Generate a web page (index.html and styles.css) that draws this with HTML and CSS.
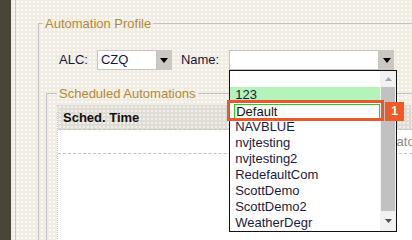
FILE: index.html
```html
<!DOCTYPE html>
<html>
<head>
<meta charset="utf-8">
<link rel="stylesheet" href="styles.css">
</head>
<body>
<div class="app">
  <div class="rail"></div>
  <div class="gutter"></div>
  <div class="main">
    <fieldset class="profile">
      <legend class="legend">Automation Profile</legend>
      <div class="filters">
        <span class="lbl">ALC:</span>
        <div class="select alc">
          <span class="value">CZQ</span>
          <span class="btn"><svg width="8" height="5" viewBox="0 0 8 5"><polygon points="0,0 8,0 4,5" fill="#000"/></svg></span>
        </div>
        <span class="lbl name-lbl">Name:</span>
        <div class="select name">
          <span class="value"></span>
          <span class="btn"><svg width="8" height="5" viewBox="0 0 8 5"><polygon points="0,0 8,0 4,5" fill="#000"/></svg></span>
          <div class="dropdown">
            <div class="options">
              <div class="opt"></div>
              <div class="opt sel">123</div>
              <div class="opt focus"><span class="ring">Default</span></div>
              <div class="opt">NAVBLUE</div>
              <div class="opt">nvjtesting</div>
              <div class="opt">nvjtesting2</div>
              <div class="opt">RedefaultCom</div>
              <div class="opt">ScottDemo</div>
              <div class="opt">ScottDemo2</div>
              <div class="opt">WeatherDegr</div>
            </div>
            <div class="scrollbar">
              <div class="sb-btn"><svg width="7" height="4" viewBox="0 0 7 4"><polygon points="0,4 7,4 3.5,0" fill="#a6a6a6"/></svg></div>
              <div class="sb-thumb"></div>
              <div class="sb-btn down"><svg width="7" height="4" viewBox="0 0 7 4"><polygon points="0,0 7,0 3.5,4" fill="#505050"/></svg></div>
            </div>
            <div class="callout"></div>
            <div class="badge">1</div>
          </div>
        </div>
      </div>
      <fieldset class="sched">
        <legend class="legend inner">Scheduled Automations</legend>
        <div class="table">
          <div class="thead"><div class="th">Sched. Time</div></div>
          <div class="trow"><div class="td first"></div><div class="td muted">Automator</div></div>
        </div>
      </fieldset>
    </fieldset>
  </div>
</div>
</body>
</html>
```
FILE: styles.css
```css
* { box-sizing: border-box; }
html, body { margin: 0; padding: 0; }
body {
  width: 412px;
  height: 240px;
  overflow: hidden;
  font-family: "Liberation Sans", Arial, sans-serif;
  font-size: 13px;
  color: #16163a;
}
.app {
  display: flex;
  width: 412px;
  height: 240px;
  overflow: hidden;
  background-color: #f0ece2;
  background-image: radial-gradient(circle, rgba(255,255,255,0.75) 0.7px, transparent 0.9px);
  background-size: 4px 4px;
}
.rail { width: 11px; flex: none; background: #4a4637; }
.gutter { width: 5px; flex: none; border-right: 1px solid #c6c3ca; }
.main { flex: 1; min-width: 0; padding: 16px 0 0 22px; overflow: hidden; }

.profile {
  margin: 0;
  padding: 0 0 0 7px;
  width: 600px;
  min-width: 0;
  border: 1px solid #c4c0c6;
  border-right: 0;
  border-bottom: 0;
}
.legend {
  font-size: 13px;
  color: #b38837;
  padding: 0 2px;
  margin-left: -3px;
}
.legend.inner { margin-left: 0; }

.filters {
  display: flex;
  align-items: center;
  margin-top: 19px;
  padding-left: 13px;
  height: 20px;
}
.lbl { line-height: 20px; }
.select {
  position: relative;
  display: flex;
  height: 20px;
}
.alc { width: 75px; margin-left: 9px; }
.name-lbl { margin-left: 9px; }
.name { width: 165px; margin-left: 10px; }
.select .value {
  flex: 1;
  background: #fff;
  border: 1px solid #c6c6c6;
  line-height: 18px;
  padding-left: 3px;
}
.select .btn {
  width: 15px;
  flex: none;
  background: #cbc8c2;
  display: flex;
  align-items: center;
  justify-content: center;
}

.dropdown {
  position: absolute;
  left: 0;
  top: 20px;
  width: 168px;
  height: 162px;
  border: 1px solid #111;
  background: #fff;
  display: flex;
  z-index: 5;
}
.options { width: 150px; }
.opt {
  height: 16px;
  line-height: 16px;
  padding-left: 5px;
  color: #1a1a40;
  white-space: nowrap;
}
.opt.sel { background: #b4f3ba; }
.opt.focus { padding-left: 4px; padding-top: 1px; }
.ring {
  display: block;
  height: 15px;
  line-height: 13px;
  border: 1px solid #1ed41e;
  padding-left: 1px;
  color: #111;
}
.scrollbar {
  width: 16px;
  display: flex;
  flex-direction: column;
  background: #f1f1f1;
}
.sb-btn {
  height: 16px;
  display: flex;
  align-items: center;
  justify-content: center;
}
.sb-btn.down { height: 20px; }
.sb-thumb { flex: 1; background: #c1c1c1; margin: 0 1px; }

.callout {
  position: absolute;
  left: -3px;
  top: 29px;
  width: 157px;
  height: 21px;
  border: 3px solid #e9582a;
}
.badge {
  position: absolute;
  left: 155px;
  top: 31px;
  width: 19px;
  height: 19px;
  background: #ee5b26;
  color: #fff;
  font-weight: bold;
  font-size: 12px;
  line-height: 19px;
  text-align: center;
}

.sched {
  margin: 16px 0 0 0;
  padding: 0 0 0 10px;
  min-width: 0;
  border: 1px solid #c4c0c6;
  border-right: 0;
  border-bottom: 0;
}
.table {
  margin-top: 4px;
  height: 200px;
  background: #fff;
  border-left: 1px dotted #cfccd0;
}
.thead {
  height: 25px;
  background-color: #dfdcd4;
  background-image: radial-gradient(circle, rgba(255,255,255,0.6) 0.7px, transparent 0.9px);
  background-size: 4px 4px;
  border-bottom: 1px dashed #c3c0c6;
  display: flex;
  align-items: center;
}
.th { font-weight: bold; color: #111; padding-left: 5px; }
.trow {
  display: flex;
  height: 24px;
  align-items: center;
  border-bottom: 1px dashed #c3c0c6;
}
.td.first { width: 301px; flex: none; }
.muted { color: #8a8a8a; }
```
